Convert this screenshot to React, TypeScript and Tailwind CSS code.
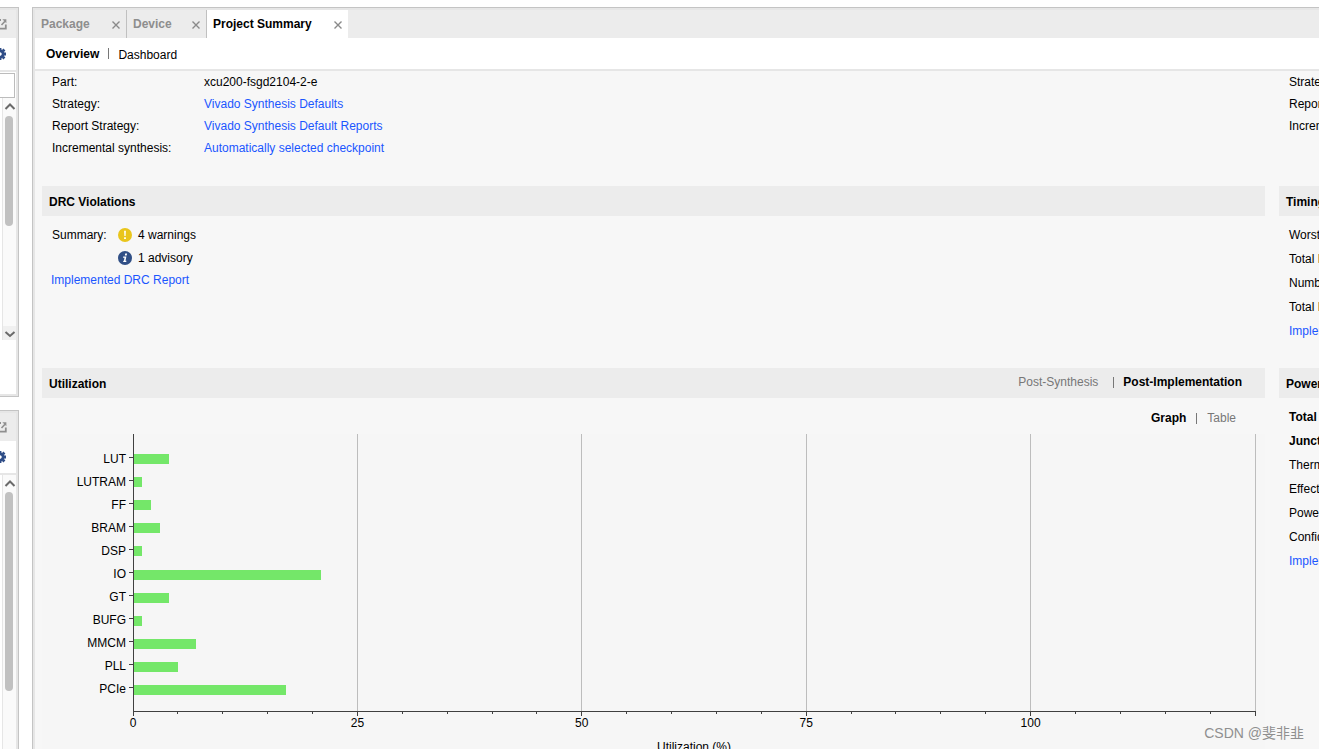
import React from 'react';

interface Row {
  label: string;
  bold?: boolean;
  link?: boolean;
}

const utilization = [
  { name: 'LUT', value: 4 },
  { name: 'LUTRAM', value: 1 },
  { name: 'FF', value: 2 },
  { name: 'BRAM', value: 3 },
  { name: 'DSP', value: 1 },
  { name: 'IO', value: 21 },
  { name: 'GT', value: 4 },
  { name: 'BUFG', value: 1 },
  { name: 'MMCM', value: 7 },
  { name: 'PLL', value: 5 },
  { name: 'PCIe', value: 17 },
];

const synthesis = [
  { label: 'Part:', value: 'xcu200-fsgd2104-2-e' },
  { label: 'Strategy:', value: 'Vivado Synthesis Defaults', link: true },
  { label: 'Report Strategy:', value: 'Vivado Synthesis Default Reports', link: true },
  { label: 'Incremental synthesis:', value: 'Automatically selected checkpoint', link: true },
];

const timing: Row[] = [
  { label: 'Worst Negative Slack (WNS):' },
  { label: 'Total Negative Slack (TNS):' },
  { label: 'Number of Failing Endpoints:' },
  { label: 'Total Number of Endpoints:' },
  { label: 'Implemented Timing Report', link: true },
];

const power: Row[] = [
  { label: 'Total On-Chip Power:', bold: true },
  { label: 'Junction Temperature:', bold: true },
  { label: 'Thermal Margin:' },
  { label: 'Effective JA:' },
  { label: 'Power supplied to off-chip devices:' },
  { label: 'Confidence level:' },
  { label: 'Implemented Power Report', link: true },
];

const Link = ({ children }: { children: React.ReactNode }) => (
  <a href="#" className="text-[#1a56ff] hover:underline">{children}</a>
);

const Separator = () => <span className="h-[11px] w-px bg-[#777]" />;

const Tab = ({ title, width, active = false }: { title: string; width: string; active?: boolean }) => (
  <div className={`flex items-center justify-between pr-[5px] pl-[6px] ${width} ${active ? 'bg-white' : 'border-r border-[#c0c0c0] text-[#8e8e8e]'}`}>
    <button role="tab" aria-selected={active} className="font-bold">{title}</button>
    <button aria-label={`Close ${title}`} className="pt-0.5">
      <svg width="10" height="10" viewBox="0 0 10 10" stroke="#8a8a8a" strokeWidth="1.4">
        <path d="M1.5 1.5l7 7M8.5 1.5l-7 7" />
      </svg>
    </button>
  </div>
);

const SectionTitle = ({ title, children }: { title: string; children?: React.ReactNode }) => (
  <div className="flex h-[30px] items-center justify-between bg-[#ececec] pl-[7px]">
    <h2 className="pt-0.5 font-bold">{title}</h2>
    {children}
  </div>
);

const RowList = ({ rows }: { rows: Row[] }) => (
  <ul className="pt-[7px] pl-[10px] leading-6">
    {rows.map((row) => (
      <li key={row.label} className={row.bold ? 'font-bold' : ''}>
        {row.link ? <Link>{row.label}</Link> : row.label}
      </li>
    ))}
  </ul>
);

const Arrow = ({ down = false }: { down?: boolean }) => (
  <svg width="13" height="14" viewBox="0 0 13 14" fill="none" stroke="#6a6a6a" strokeWidth="2" className="shrink-0">
    <path d={down ? 'M2.5 6l4.5 4 4.5-4' : 'M2.5 11l4.5-4.5 4.5 4.5'} />
  </svg>
);

const PanelHeader = () => (
  <>
    <div className="flex h-7 shrink-0 items-center justify-end bg-[#ececec] pr-[9px]">
      <button aria-label="Float panel">
        <svg width="12" height="12" viewBox="0 0 12 12" fill="none" stroke="#8f8f8f">
          <path d="M6 2H1.5v8.7h9.3V6.5" strokeWidth="1.8" />
          <path d="M6.5 7L10 3.2" strokeWidth="1.6" />
          <path d="M7.4 1.2h4v4z" fill="#8f8f8f" stroke="none" />
        </svg>
      </button>
    </div>
    <div className="flex h-8 shrink-0 items-center justify-end pr-[10px]">
      <button aria-label="Settings">
        <svg width="12" height="12" viewBox="-6 -6 12 12" fill="none" stroke="#2f4d87">
          <circle r="3.1" strokeWidth="2.8" />
          <path d="M-6 0h2M4 0h2M0-6v2M0 4v2M-4.4-4.4l1.6 1.6M2.8 2.8l1.6 1.6M-4.4 4.4l1.6-1.6M2.8-2.8l1.6-1.6" strokeWidth="2.8" />
        </svg>
      </button>
    </div>
    <div className="h-0.5 shrink-0 bg-[#e6e6e6]" />
  </>
);

const panelFrame = 'flex flex-col overflow-hidden border-r border-[#c4c4c4]';

const UtilizationChart = () => {
  const at = (value: number) => `${value / 1.25}%`;
  const ticks = Array.from({ length: 26 }, (_, i) => i * 5);

  return (
    <div className="bg-[#f6f6f6] pr-[10px] pl-[91px]">
      <svg width="100%" height="322" className="block overflow-visible" role="img" aria-label="Utilization (%)">
        <g shapeRendering="crispEdges">
          {[25, 50, 75, 100, 125].map((v) => (
            <line key={v} x1={at(v)} x2={at(v)} y1="0" y2="277" stroke="#bdbdbd" />
          ))}
          {utilization.map((u, i) => (
            <rect key={u.name} x="0" y={20 + Math.round(i * 23.1)} width={at(u.value)} height="10" fill="#74e769" />
          ))}
          <line x1="0" x2="0" y1="0" y2="282" stroke="#404040" />
          <line x1="0" x2="100%" y1="277" y2="277" stroke="#404040" />
          {ticks.map((v) => (
            <line key={v} x1={at(v)} x2={at(v)} y1="277" y2={v % 25 ? 280 : 282} stroke="#404040" />
          ))}
          {utilization.map((u, i) => (
            <line key={u.name} x1="-4" x2="0" y1={23 + i * 23} y2={23 + i * 23} stroke="#404040" />
          ))}
        </g>
        {utilization.map((u, i) => (
          <text key={u.name} x="-7" y={29 + i * 23} textAnchor="end">{u.name}</text>
        ))}
        {[0, 25, 50, 75, 100].map((v) => (
          <text key={v} x={at(v)} y="293" textAnchor="middle">{v}</text>
        ))}
        <text x="50%" y="317" textAnchor="middle">Utilization (%)</text>
      </svg>
    </div>
  );
};

const Sidebar = () => (
  <aside className="flex w-[19px] shrink-0 flex-col gap-[13px]">
    <section className={`${panelFrame} h-[390px] shrink-0 border-y`}>
      <div className="flex min-h-0 flex-1 flex-col border-y-2 border-r-2 border-[#e6e6e6]">
        <PanelHeader />
        <input aria-label="Search" className="mt-px mr-px h-[25px] shrink-0 border border-l-0 border-[#bcbcbc] bg-white" />
        <div className="ml-0.5 flex h-[242px] flex-col items-center border-l border-[#e6e6e6] bg-[#fafafa]">
          <Arrow />
          <div className="mt-1 mr-0.5 h-[110px] w-2 rounded-full bg-[#c1c1c1]" />
          <div className="mt-auto bg-[#f0f0f0]"><Arrow down /></div>
        </div>
      </div>
    </section>
    <section className={`${panelFrame} min-h-0 flex-1 border-t`}>
      <div className="flex min-h-0 flex-1 flex-col border-t-2 border-r-2 border-[#e6e6e6]">
        <PanelHeader />
        <div className="ml-0.5 flex flex-1 flex-col items-center border-l border-[#e6e6e6] bg-[#fafafa]">
          <Arrow />
          <div className="mt-[3px] mr-0.5 h-[199px] w-2 rounded-full bg-[#c1c1c1]" />
        </div>
      </div>
    </section>
  </aside>
);

const App: React.FC = () => {
  return (
    <div className="relative flex h-screen gap-[13px] overflow-hidden bg-white pt-[7px] font-['Liberation_Sans',Arial,sans-serif] text-[12px] leading-4 text-black">
      <Sidebar />

      <main className="flex min-w-0 flex-1 border-t border-l border-[#c4c4c4]">
        <div className="flex min-w-0 flex-1 flex-col border-t-2 border-l-2 border-[#e6e6e6]">
          <div role="tablist" className="flex h-7 shrink-0 bg-[#ececec]">
            <Tab title="Package" width="w-[92px]" />
            <Tab title="Device" width="w-20" />
            <Tab title="Project Summary" width="w-[141px]" active />
          </div>

          <nav className="flex h-[33px] shrink-0 items-center gap-[9px] border-b-2 border-[#e6e6e6] pl-[11px]">
            <button className="font-bold">Overview</button>
            <Separator />
            <button className="pt-0.5">Dashboard</button>
          </nav>

          <div className="flex min-h-0 flex-1 gap-[14px] overflow-hidden bg-[#f7f7f7] pl-[7px]">
            <div className="min-w-0 flex-1">
              <section className="h-[115px]">
                <dl className="grid grid-cols-[152px_1fr] pl-[10px] leading-[22px]">
                  {synthesis.map((row) => (
                    <React.Fragment key={row.label}>
                      <dt>{row.label}</dt>
                      <dd>{row.link ? <Link>{row.value}</Link> : row.value}</dd>
                    </React.Fragment>
                  ))}
                </dl>
              </section>

              <section className="h-[182px]">
                <SectionTitle title="DRC Violations" />
                <div className="pt-[7px] pl-[9px] leading-6">
                  <div className="flex pl-px">
                    <span className="w-[66px]">Summary:</span>
                    <ul>
                      <li className="flex items-center gap-[6px]">
                        <svg width="14" height="14" viewBox="0 0 14 14">
                          <circle cx="7" cy="7" r="7" fill="#e9c51b" />
                          <path d="M6.1 2.8h1.8l-.3 5.2H6.4zM6.1 9.3h1.8V11H6.1z" fill="#fff" />
                        </svg>
                        4 warnings
                      </li>
                      <li className="flex items-center gap-[6px] leading-[22px]">
                        <svg width="14" height="14" viewBox="0 0 14 14">
                          <circle cx="7" cy="7" r="7" fill="#304f86" />
                          <path d="M7.2 2.6h1.9l-.4 1.8H6.8zM5.2 5.5h3.2l-.9 4.2h1l-.3 1.3H5.1l.3-1.2h.5l.6-3H5z" fill="#fff" />
                        </svg>
                        1 advisory
                      </li>
                    </ul>
                  </div>
                  <p className="leading-[22px]"><Link>Implemented DRC Report</Link></p>
                </div>
              </section>

              <section>
                <SectionTitle title="Utilization">
                  <div className="flex items-center gap-[9px] pr-[23px] pb-0.5">
                    <button className="pr-[6px] text-[#777]">Post-Synthesis</button>
                    <Separator />
                    <button className="font-bold">Post-Implementation</button>
                  </div>
                </SectionTitle>
                <div className="flex h-9 items-center justify-end gap-[10px] pt-1 pr-[29px]">
                  <button className="font-bold">Graph</button>
                  <Separator />
                  <button className="text-[#777]">Table</button>
                </div>
                <UtilizationChart />
              </section>
            </div>

            <div className="w-10 shrink-0 overflow-hidden whitespace-nowrap">
              <section className="h-[115px] pl-[10px] leading-[22px]">
                <p>Strategy:</p>
                <p>Report Strategy:</p>
                <p>Incremental implementation:</p>
              </section>
              <section className="h-[182px]">
                <SectionTitle title="Timing" />
                <RowList rows={timing} />
              </section>
              <section>
                <SectionTitle title="Power" />
                <RowList rows={power} />
              </section>
            </div>
          </div>
        </div>
      </main>

      <p className="absolute right-[15px] bottom-[6px] font-['Liberation_Sans','Noto_Sans_CJK_SC',sans-serif] text-[14px] leading-5 text-[#8f8f8f]">CSDN @斐非韭</p>
    </div>
  );
};

export default App;
